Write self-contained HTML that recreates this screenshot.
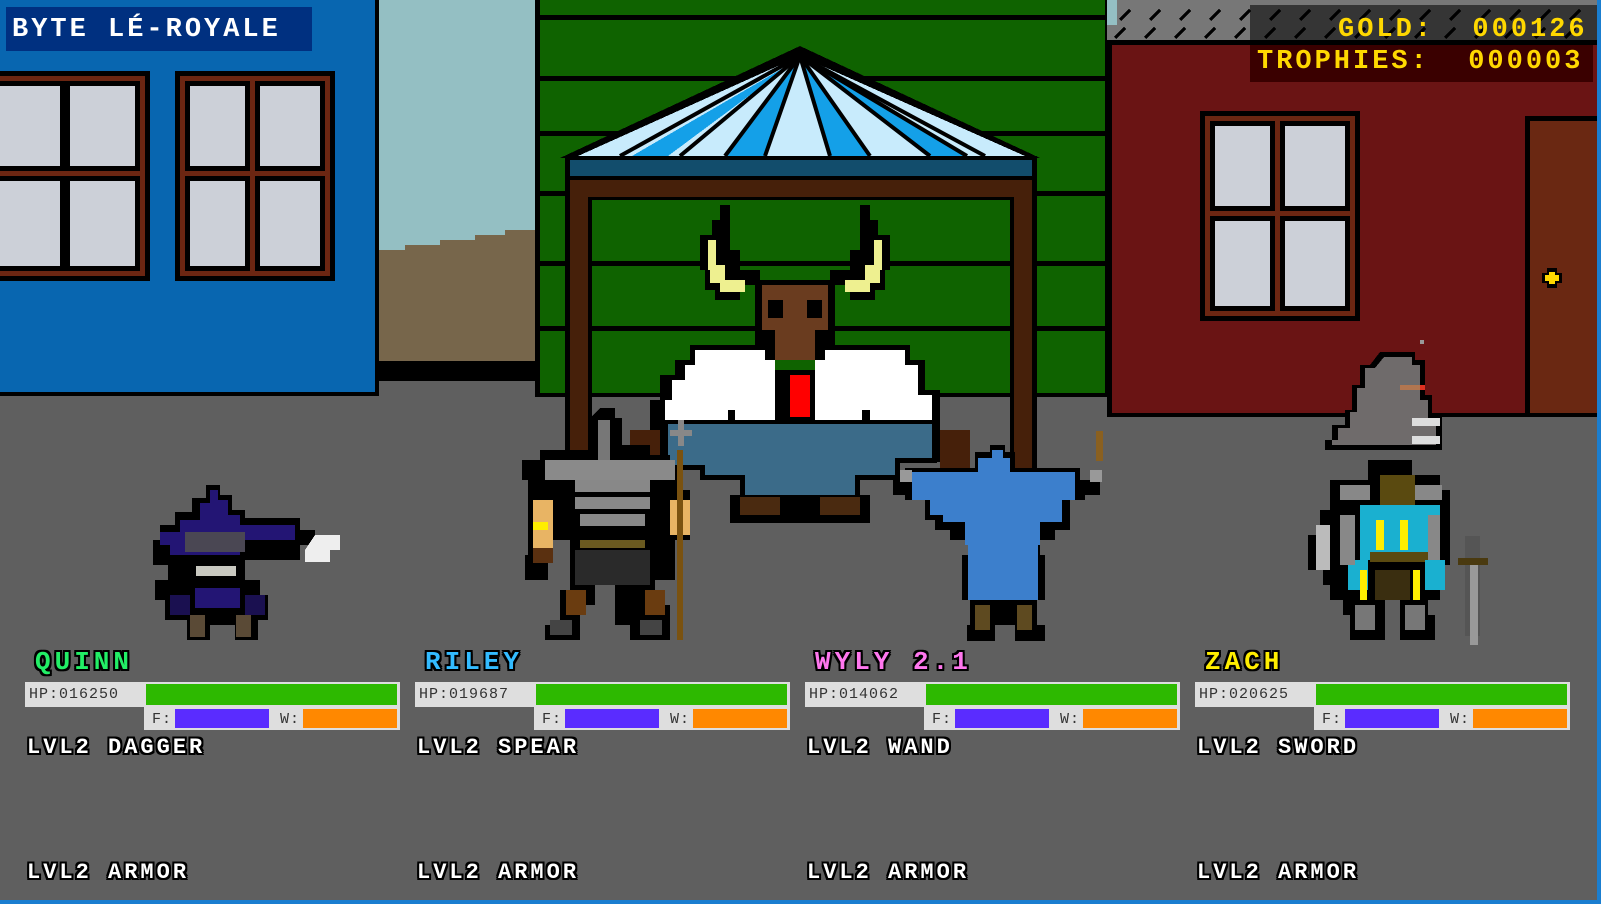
<!DOCTYPE html>
<html><head><meta charset="utf-8"><style>
html,body{margin:0;padding:0;background:#5f5f5f;}
body{width:1601px;height:904px;overflow:hidden;position:relative;font-family:"Liberation Mono",monospace;}
svg{position:absolute;left:0;top:0;}
.t{position:absolute;font-weight:bold;white-space:pre;}
.out{color:#fff;text-shadow:2px 0 #000,-2px 0 #000,0 2px #000,0 -2px #000,2px 2px #000,-2px -2px #000,2px -2px #000,-2px 2px #000;}
.nm{font-size:26px;line-height:28px;letter-spacing:4px;top:648px;}
.it{font-size:22px;line-height:24px;letter-spacing:3px;}
.hp{position:absolute;background:#dedede;}
.lbl{position:absolute;font-family:"Liberation Mono",monospace;font-size:15px;color:#333;letter-spacing:1px;}
</style></head><body>
<svg width="1601" height="904" viewBox="0 0 1601 904" shape-rendering="crispEdges">
<rect width="1601" height="904" fill="#5f5f5f"/>
<rect x="379" y="0" width="160" height="361" fill="#94bfc3"/>
<path d="M379 250 H405 V245 H440 V240 H475 V235 H505 V230 H539 V361 H379Z" fill="#77664b"/>
<rect x="379" y="361" width="160" height="20" fill="#000"/>
<rect x="0" y="0" width="379" height="396" fill="#000"/>
<rect x="0" y="0" width="375" height="392" fill="#0866b0"/>
<rect x="6" y="7" width="306" height="44" fill="#003080"/>
<g>
<rect x="0" y="71" width="150" height="210" fill="#000"/><rect x="0" y="76" width="145" height="200" fill="#6b2612"/>
<rect x="0" y="81" width="65" height="90" fill="#000"/><rect x="0" y="86" width="60" height="80" fill="#ccd0d8"/>
<rect x="65" y="81" width="75" height="90" fill="#000"/><rect x="70" y="86" width="65" height="80" fill="#ccd0d8"/>
<rect x="0" y="176" width="65" height="95" fill="#000"/><rect x="0" y="181" width="60" height="85" fill="#ccd0d8"/>
<rect x="65" y="176" width="75" height="95" fill="#000"/><rect x="70" y="181" width="65" height="85" fill="#ccd0d8"/>
</g>
<g>
<rect x="175" y="71" width="160" height="210" fill="#000"/><rect x="180" y="76" width="150" height="200" fill="#6b2612"/>
<rect x="185" y="81" width="65" height="90" fill="#000"/><rect x="190" y="86" width="55" height="80" fill="#ccd0d8"/>
<rect x="255" y="81" width="70" height="90" fill="#000"/><rect x="260" y="86" width="60" height="80" fill="#ccd0d8"/>
<rect x="185" y="176" width="65" height="95" fill="#000"/><rect x="190" y="181" width="55" height="85" fill="#ccd0d8"/>
<rect x="255" y="176" width="70" height="95" fill="#000"/><rect x="260" y="181" width="60" height="85" fill="#ccd0d8"/>
</g>
<rect x="535" y="0" width="575" height="397" fill="#000"/>
<rect x="540" y="0" width="565" height="393" fill="#0f6300"/>
<g fill="#000">
<rect x="540" y="15" width="565" height="5"/><rect x="540" y="76" width="565" height="5"/>
<rect x="540" y="131" width="565" height="5"/><rect x="540" y="191" width="565" height="5"/>
<rect x="540" y="261" width="565" height="5"/><rect x="540" y="326" width="565" height="5"/>
</g>
<polygon points="800,46 1040,158 560,158" fill="#000"/>
<polygon points="800,56 1025,156 578,156" fill="#c8ebfc"/>
<g fill="#14a0e8">
<polygon points="797,60 632,156 668,156"/><polygon points="799,60 725,156 765,156"/>
<polygon points="801,60 830,156 870,156"/><polygon points="803,60 930,156 967,156"/>
</g>
<g stroke="#000" stroke-width="4" shape-rendering="auto">
<line x1="800" y1="56" x2="620" y2="156"/><line x1="800" y1="56" x2="680" y2="156"/>
<line x1="800" y1="56" x2="725" y2="156"/><line x1="800" y1="56" x2="765" y2="156"/>
<line x1="800" y1="56" x2="830" y2="156"/><line x1="800" y1="56" x2="870" y2="156"/>
<line x1="800" y1="56" x2="930" y2="156"/><line x1="800" y1="56" x2="967" y2="156"/>
<line x1="800" y1="56" x2="985" y2="156"/>
</g>
<rect x="565" y="156" width="472" height="44" fill="#000"/>
<rect x="570" y="160" width="462" height="16" fill="#124d6c"/>
<rect x="570" y="180" width="462" height="17" fill="#46200a"/>
<rect x="565" y="197" width="27" height="300" fill="#000"/>
<rect x="570" y="197" width="18" height="300" fill="#46200a"/>
<rect x="1010" y="197" width="27" height="300" fill="#000"/>
<rect x="1014" y="197" width="18" height="300" fill="#46200a"/>
<g>
<path d="M720 205 H730 V250 H740 V270 H760 V285 H740 V300 H715 V290 H705 V270 H700 V235 H712 V220 H720Z" fill="#000"/>
<path d="M708 240 H716 V265 H725 V280 H745 V292 H720 V283 H710 V270 H708Z" fill="#eef090"/>
<path d="M870 205 H860 V250 H850 V270 H830 V285 H850 V300 H875 V290 H885 V270 H890 V235 H878 V220 H870Z" fill="#000"/>
<path d="M882 240 H874 V265 H865 V280 H845 V292 H870 V283 H880 V270 H882Z" fill="#eef090"/>
<rect x="755" y="280" width="80" height="80" fill="#000"/>
<rect x="762" y="285" width="66" height="45" fill="#6a3c1f"/>
<rect x="775" y="325" width="40" height="35" fill="#6a3c1f"/>
<rect x="768" y="300" width="15" height="18" fill="#000"/><rect x="807" y="300" width="15" height="18" fill="#000"/>
<path d="M690 345 H770 V370 H820 V345 H910 V360 H925 V390 H940 V462 H650 V400 H660 V375 H675 V360 H690Z" fill="#000"/>
<path d="M695 350 H765 V360 H775 V455 H760 V440 H745 V420 H735 V410 H728 V420 H715 V440 H705 V455 H665 V400 H672 V380 H685 V365 H695Z" fill="#fff"/>
<path d="M815 360 H825 V350 H905 V365 H918 V395 H932 V455 H895 V440 H885 V420 H870 V410 H862 V420 H855 V440 H840 V455 H815Z" fill="#fff"/>
<rect x="790" y="375" width="20" height="42" fill="#ff0000"/>
<rect x="630" y="430" width="30" height="40" fill="#46200a"/><rect x="940" y="430" width="30" height="40" fill="#46200a"/>
<path d="M663 420 H937 V463 H900 V480 H860 V500 H740 V480 H700 V470 H663Z" fill="#000"/>
<path d="M668 424 H932 V458 H895 V475 H855 V495 H745 V475 H705 V465 H668Z" fill="#3b6b89"/>
<rect x="730" y="495" width="140" height="28" fill="#000"/>
<rect x="740" y="497" width="40" height="18" fill="#4a2a10"/><rect x="820" y="497" width="40" height="18" fill="#4a2a10"/>
</g>
<rect x="1107" y="0" width="494" height="40" fill="#777"/>
<g stroke="#000" stroke-width="3">
<path d="M1120 20 l10 -10 M1150 20 l10 -10 M1180 20 l10 -10 M1210 20 l10 -10 M1240 20 l10 -10 M1270 20 l10 -10 M1300 20 l10 -10 M1330 20 l10 -10 M1360 20 l10 -10 M1390 20 l10 -10 M1420 20 l10 -10 M1450 20 l10 -10 M1480 20 l10 -10 M1510 20 l10 -10 M1540 20 l10 -10 M1570 20 l10 -10"/>
<path d="M1115 38 l10 -10 M1145 38 l10 -10 M1175 38 l10 -10 M1205 38 l10 -10 M1235 38 l10 -10 M1265 38 l10 -10 M1295 38 l10 -10 M1325 38 l10 -10 M1355 38 l10 -10 M1385 38 l10 -10 M1415 38 l10 -10 M1445 38 l10 -10 M1475 38 l10 -10 M1505 38 l10 -10 M1535 38 l10 -10 M1565 38 l10 -10"/>
</g>
<rect x="1107" y="0" width="10" height="25" fill="#94bfc3"/>
<rect x="1250" y="5" width="351" height="37" fill="#000" opacity="0.55"/>
<rect x="1107" y="40" width="494" height="377" fill="#000"/>
<rect x="1112" y="45" width="489" height="368" fill="#6a1414"/>
<rect x="1250" y="45" width="343" height="37" fill="#3a0000"/>
<rect x="1200" y="111" width="160" height="210" fill="#000"/><rect x="1205" y="116" width="150" height="200" fill="#6b2612"/>
<rect x="1210" y="121" width="65" height="90" fill="#000"/><rect x="1215" y="126" width="55" height="80" fill="#ccd0d8"/>
<rect x="1280" y="121" width="70" height="90" fill="#000"/><rect x="1285" y="126" width="60" height="80" fill="#ccd0d8"/>
<rect x="1210" y="216" width="65" height="95" fill="#000"/><rect x="1215" y="221" width="55" height="85" fill="#ccd0d8"/>
<rect x="1280" y="216" width="70" height="95" fill="#000"/><rect x="1285" y="221" width="60" height="85" fill="#ccd0d8"/>
<rect x="1525" y="116" width="76" height="297" fill="#000"/><rect x="1530" y="121" width="71" height="292" fill="#6a2812"/>
<path d="M1547 268 h10 v5 h5 v10 h-5 v5 h-10 v-5 h-5 v-10 h5z" fill="#000"/>
<path d="M1549 272 h6 v3 h4 v6 h-4 v3 h-6 v-3 h-4 v-6 h4z" fill="#ffd800"/>
<rect x="1597" y="0" width="4" height="904" fill="#1a7ed0"/>
<rect x="0" y="900" width="1601" height="4" fill="#1a7ed0"/>
<path d="M1380 352 H1415 V360 H1425 V395 H1432 V415 H1442 V450 H1325 V440 H1332 V425 H1345 V410 H1352 V385 H1360 V365 H1370 Z" fill="#000"/>
<path d="M1384 357 H1412 V365 H1420 V400 H1428 V418 H1436 V445 H1332 V440 H1338 V428 H1350 V412 H1357 V388 H1365 V368 H1375Z" fill="#6f6b6b"/>
<rect x="1400" y="385" width="20" height="5" fill="#b27650"/><rect x="1420" y="385" width="5" height="5" fill="#e03020"/>
<rect x="1412" y="418" width="28" height="8" fill="#ddd"/><rect x="1412" y="436" width="28" height="8" fill="#ddd"/>
<rect x="1420" y="340" width="4" height="4" fill="#999"/>
<path d="M206 485 H220 V495 H232 V510 H245 V518 H300 V530 H315 V545 H300 V560 H245 V580 H260 V595 H268 V620 H258 V640 H235 V625 H210 V640 H187 V620 H165 V600 H155 V580 H168 V565 H153 V540 H160 V525 H175 V512 H192 V498 H206Z" fill="#000"/>
<path d="M210 490 H218 V500 H228 V515 H240 V525 H295 V540 H240 V555 H170 V545 H160 V532 H180 V520 H200 V503 H210Z" fill="#231574"/>
<rect x="185" y="532" width="60" height="20" fill="#4a4753"/>
<rect x="196" y="566" width="40" height="10" fill="#c8c8c0"/>
<rect x="195" y="588" width="45" height="20" fill="#231574"/>
<rect x="170" y="595" width="20" height="20" fill="#1a1050"/><rect x="245" y="595" width="20" height="20" fill="#1a1050"/>
<rect x="190" y="615" width="15" height="22" fill="#5a4a36"/><rect x="236" y="615" width="15" height="22" fill="#5a4a36"/>
<path d="M315 535 H340 V550 H330 V562 H305 V550 Z" fill="#eee"/>
<path d="M600 408 H615 V418 H622 V445 H650 V455 H670 V470 H680 V490 H690 V540 H675 V580 H655 V605 H670 V640 H630 V625 H615 V580 H595 V605 H580 V640 H545 V625 H560 V590 H570 V540 H548 V580 H525 V555 H528 V480 H522 V460 H540 V450 H590 V418Z" fill="#000"/>
<rect x="598" y="420" width="12" height="40" fill="#777"/>
<rect x="545" y="460" width="130" height="20" fill="#8a8a8a"/>
<rect x="575" y="480" width="75" height="12" fill="#888"/><rect x="575" y="497" width="75" height="12" fill="#888"/>
<rect x="580" y="514" width="65" height="12" fill="#888"/>
<rect x="533" y="500" width="20" height="50" fill="#e8b464"/><rect x="533" y="522" width="15" height="8" fill="#ffee00"/>
<rect x="533" y="548" width="20" height="15" fill="#5a3010"/>
<rect x="670" y="500" width="20" height="35" fill="#e8b464"/>
<rect x="580" y="540" width="65" height="8" fill="#6a5a20"/>
<rect x="575" y="550" width="75" height="35" fill="#2a2a2a"/>
<rect x="566" y="590" width="20" height="25" fill="#6a3c10"/><rect x="645" y="590" width="20" height="25" fill="#6a3c10"/>
<rect x="550" y="620" width="22" height="15" fill="#444"/><rect x="640" y="620" width="22" height="15" fill="#444"/>
<rect x="677" y="450" width="6" height="190" fill="#7a5210"/>
<path d="M678 420 h6 v10 h8 v6 h-8 v10 h-6 v-10 h-8 v-6 h8z" fill="#888"/>
<path d="M990 445 H1005 V452 H1015 V468 H1080 V480 H1100 V495 H1085 V500 H1070 V530 H1055 V540 H1040 V555 H1045 V600 H1037 V625 H1045 V641 H1015 V625 H995 V641 H967 V625 H970 V600 H962 V555 H968 V540 H950 V530 H935 V520 H925 V500 H905 V495 H893 V480 H905 V468 H975 V452 H990Z" fill="#000"/>
<path d="M992 450 H1003 V458 H1010 V472 H1075 V500 H1062 V522 H1040 V545 H1038 V600 H968 V545 H965 V522 H943 V515 H930 V500 H912 V472 H978 V458 H992Z" fill="#3c7fcc"/>
<rect x="975" y="605" width="15" height="25" fill="#5e4a20"/><rect x="1017" y="605" width="15" height="25" fill="#5e4a20"/>
<rect x="900" y="470" width="12" height="12" fill="#999"/><rect x="1090" y="470" width="12" height="12" fill="#999"/>
<rect x="1096" y="431" width="7" height="30" fill="#8a6020"/>
<path d="M1368 460 H1412 V475 H1440 V490 H1450 V565 H1440 V600 H1428 V615 H1435 V640 H1400 V600 H1385 V640 H1350 V615 H1343 V600 H1330 V585 H1323 V570 H1308 V535 H1320 V510 H1330 V480 H1368Z" fill="#000"/>
<rect x="1340" y="485" width="30" height="15" fill="#888"/><rect x="1412" y="485" width="30" height="15" fill="#888"/>
<rect x="1380" y="475" width="35" height="40" fill="#5a4a10"/>
<rect x="1360" y="505" width="80" height="55" fill="#1ab0d0"/>
<rect x="1376" y="520" width="8" height="30" fill="#ffee00"/><rect x="1400" y="520" width="8" height="30" fill="#ffee00"/>
<rect x="1370" y="552" width="60" height="10" fill="#5a4a10"/>
<rect x="1348" y="560" width="20" height="30" fill="#1ab0d0"/><rect x="1425" y="560" width="20" height="30" fill="#1ab0d0"/>
<rect x="1360" y="570" width="7" height="30" fill="#ffee00"/><rect x="1413" y="570" width="7" height="30" fill="#ffee00"/>
<rect x="1375" y="570" width="35" height="30" fill="#3a2e10"/>
<rect x="1316" y="525" width="14" height="45" fill="#bbb"/>
<rect x="1340" y="515" width="15" height="50" fill="#888"/><rect x="1428" y="515" width="12" height="45" fill="#888"/>
<rect x="1355" y="605" width="20" height="25" fill="#777"/><rect x="1405" y="605" width="20" height="25" fill="#777"/>
<rect x="1465" y="536" width="15" height="100" fill="#555"/><rect x="1470" y="560" width="8" height="85" fill="#999"/>
<rect x="1458" y="558" width="30" height="7" fill="#4a3a10"/>
</svg>

<div class="t" style="left:12px;top:14px;font-size:27px;color:#fff;letter-spacing:3px;line-height:32px">BYTE LÉ-ROYALE</div>
<div class="t" style="left:1338px;top:14px;font-size:27px;color:#ffd800;letter-spacing:3px;line-height:32px">GOLD:  000126</div>
<div class="t" style="left:1257px;top:46px;font-size:27px;color:#ffd800;letter-spacing:3px;line-height:32px">TROPHIES:  000003</div>

<div class="t out nm" style="left:35px;color:#22ee66">QUINN</div>
<div class="t out nm" style="left:425px;color:#33bbff">RILEY</div>
<div class="t out nm" style="left:815px;color:#ff77ee">WYLY 2.1</div>
<div class="t out nm" style="left:1205px;color:#ffee00">ZACH</div>

<div style="position:absolute;left:25px;top:682px">
<div class="hp" style="left:0;top:0;width:375px;height:25px"></div><div style="position:absolute;left:121px;top:2px;width:251px;height:21px;background:#2db900"></div>
<div class="hp" style="left:119px;top:25px;width:256px;height:23px"></div>
<div style="position:absolute;left:150px;top:27px;width:94px;height:19px;background:#5a2cff"></div>
<div style="position:absolute;left:278px;top:27px;width:94px;height:19px;background:#ff8800"></div>
<div class="lbl" style="left:4px;top:4px">HP:016250</div><div class="lbl" style="left:127px;top:29px">F:</div><div class="lbl" style="left:255px;top:29px">W:</div>
</div>
<div style="position:absolute;left:415px;top:682px">
<div class="hp" style="left:0;top:0;width:375px;height:25px"></div><div style="position:absolute;left:121px;top:2px;width:251px;height:21px;background:#2db900"></div>
<div class="hp" style="left:119px;top:25px;width:256px;height:23px"></div>
<div style="position:absolute;left:150px;top:27px;width:94px;height:19px;background:#5a2cff"></div>
<div style="position:absolute;left:278px;top:27px;width:94px;height:19px;background:#ff8800"></div>
<div class="lbl" style="left:4px;top:4px">HP:019687</div><div class="lbl" style="left:127px;top:29px">F:</div><div class="lbl" style="left:255px;top:29px">W:</div>
</div>
<div style="position:absolute;left:805px;top:682px">
<div class="hp" style="left:0;top:0;width:375px;height:25px"></div><div style="position:absolute;left:121px;top:2px;width:251px;height:21px;background:#2db900"></div>
<div class="hp" style="left:119px;top:25px;width:256px;height:23px"></div>
<div style="position:absolute;left:150px;top:27px;width:94px;height:19px;background:#5a2cff"></div>
<div style="position:absolute;left:278px;top:27px;width:94px;height:19px;background:#ff8800"></div>
<div class="lbl" style="left:4px;top:4px">HP:014062</div><div class="lbl" style="left:127px;top:29px">F:</div><div class="lbl" style="left:255px;top:29px">W:</div>
</div>
<div style="position:absolute;left:1195px;top:682px">
<div class="hp" style="left:0;top:0;width:375px;height:25px"></div><div style="position:absolute;left:121px;top:2px;width:251px;height:21px;background:#2db900"></div>
<div class="hp" style="left:119px;top:25px;width:256px;height:23px"></div>
<div style="position:absolute;left:150px;top:27px;width:94px;height:19px;background:#5a2cff"></div>
<div style="position:absolute;left:278px;top:27px;width:94px;height:19px;background:#ff8800"></div>
<div class="lbl" style="left:4px;top:4px">HP:020625</div><div class="lbl" style="left:127px;top:29px">F:</div><div class="lbl" style="left:255px;top:29px">W:</div>
</div>

<div class="t out it" style="left:27px;top:736px">LVL2 DAGGER</div>
<div class="t out it" style="left:417px;top:736px">LVL2 SPEAR</div>
<div class="t out it" style="left:807px;top:736px">LVL2 WAND</div>
<div class="t out it" style="left:1197px;top:736px">LVL2 SWORD</div>
<div class="t out it" style="left:27px;top:861px">LVL2 ARMOR</div>
<div class="t out it" style="left:417px;top:861px">LVL2 ARMOR</div>
<div class="t out it" style="left:807px;top:861px">LVL2 ARMOR</div>
<div class="t out it" style="left:1197px;top:861px">LVL2 ARMOR</div>
</body></html>
